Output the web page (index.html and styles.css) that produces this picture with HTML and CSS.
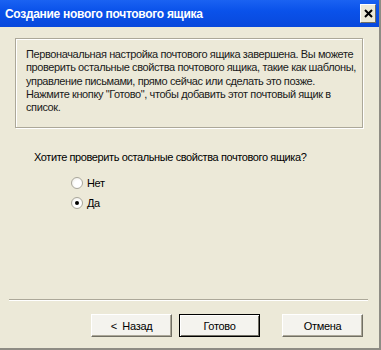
FILE: index.html
```html
<!DOCTYPE html>
<html lang="ru">
<head>
    <meta charset="UTF-8">
    <title>Создание нового почтового ящика</title>
    <link rel="stylesheet" href="styles.css">
</head>
<body>
    <div class="window">
        <div class="titlebar">
            <span class="title">Создание нового почтового ящика</span>
            <span class="close-btn">
                <svg width="9" height="9" viewBox="0 0 9 9">
                    <path d="M1 1 L8 8 M8 1 L1 8" stroke="#000" stroke-width="2" fill="none"/>
                </svg>
            </span>
        </div>

        <div class="content">
            <div class="info-box">
                Первоначальная настройка почтового ящика завершена. Вы можете<br>
                проверить остальные свойства почтового ящика, такие как шаблоны,<br>
                управление письмами, прямо сейчас или сделать это позже.<br>
                Нажмите кнопку "Готово", чтобы добавить этот почтовый ящик в<br>
                список.
            </div>

            <div class="question">Хотите проверить остальные свойства почтового ящика?</div>

            <div class="options">
                <div class="option"><span class="radio"></span>Нет</div>
                <div class="option"><span class="radio checked"></span>Да</div>
            </div>
        </div>

        <div class="separator"></div>

        <div class="buttons">
            <button class="btn">&lt;&nbsp;&nbsp;Назад</button>
            <button class="btn default">Готово</button>
            <button class="btn cancel">Отмена</button>
        </div>
    </div>
</body>
</html>
```

FILE: styles.css
```css
body {
    margin: 0;
    background: #ece9d8;
    font-family: 'Liberation Sans', Arial, sans-serif;
    font-size: 11px;
    letter-spacing: -0.4px;
    color: #000;
}

.window {
    width: 381px;
    height: 350px;
    box-sizing: border-box;
    background: #ece9d8;
    border-right: 2px solid #8e8c84;
    border-bottom: 2px solid #8e8c84;
    display: flex;
    flex-direction: column;
}

.titlebar {
    height: 27px;
    background: linear-gradient(#1a62f2, #0a52ea 40%, #0848dc);
    display: flex;
    align-items: center;
    justify-content: space-between;
    padding: 0 3px 0 5px;
}

.title {
    color: #fff;
    font-weight: bold;
    font-size: 12px;
    letter-spacing: -0.3px;
}

.close-btn {
    width: 14px;
    height: 17px;
    background: #ece9d8;
    border: 1px solid #fff;
    border-right-color: #716f64;
    border-bottom-color: #716f64;
    display: flex;
    align-items: center;
    justify-content: center;
}

.content {
    flex: 1;
    padding: 11px 16px 0 15px;
}

.info-box {
    height: 90px;
    box-sizing: border-box;
    border: 1px solid #aca899;
    box-shadow: 1px 1px 0 #fff, inset 1px 1px 0 #fff;
    padding: 9px 10px 0 10px;
    line-height: 13.3px;
    white-space: nowrap;
    color: #1a1a1a;
}

.question {
    margin: 23px 0 0 19px;
}

.options {
    margin: 13px 0 0 56px;
    display: flex;
    flex-direction: column;
    gap: 7px;
}

.option {
    display: flex;
    align-items: center;
    height: 13px;
}

.radio {
    width: 10px;
    height: 10px;
    border-radius: 50%;
    border: 1px solid #a9a79c;
    background: radial-gradient(circle at 60% 60%, #fff 40%, #e8e6dc 100%);
    margin-right: 4px;
    position: relative;
}

.radio.checked::after {
    content: "";
    position: absolute;
    left: 3px;
    top: 3px;
    width: 4px;
    height: 4px;
    border-radius: 50%;
    background: #000;
}

.separator {
    margin: 0 11px 0 9px;
    border-top: 1px solid #aca899;
    border-bottom: 1px solid #fff;
}

.buttons {
    display: flex;
    padding: 13px 0 11px 91px;
}

.btn {
    width: 81px;
    height: 23px;
    font-family: 'Liberation Sans', Arial, sans-serif;
    font-size: 11px;
    letter-spacing: -0.3px;
    background: #f4f3ee;
    border: 1px solid #fff;
    border-right-color: #716f64;
    border-bottom-color: #716f64;
    box-shadow: inset -1px -1px 0 #aca899;
    padding: 0;
    color: #000;
}

.btn.default {
    margin-left: 7px;
    border: 1px solid #000;
    box-shadow: inset 1px 1px 0 #fff, inset -1px -1px 0 #716f64;
}

.btn.cancel {
    margin-left: 22px;
}
```
